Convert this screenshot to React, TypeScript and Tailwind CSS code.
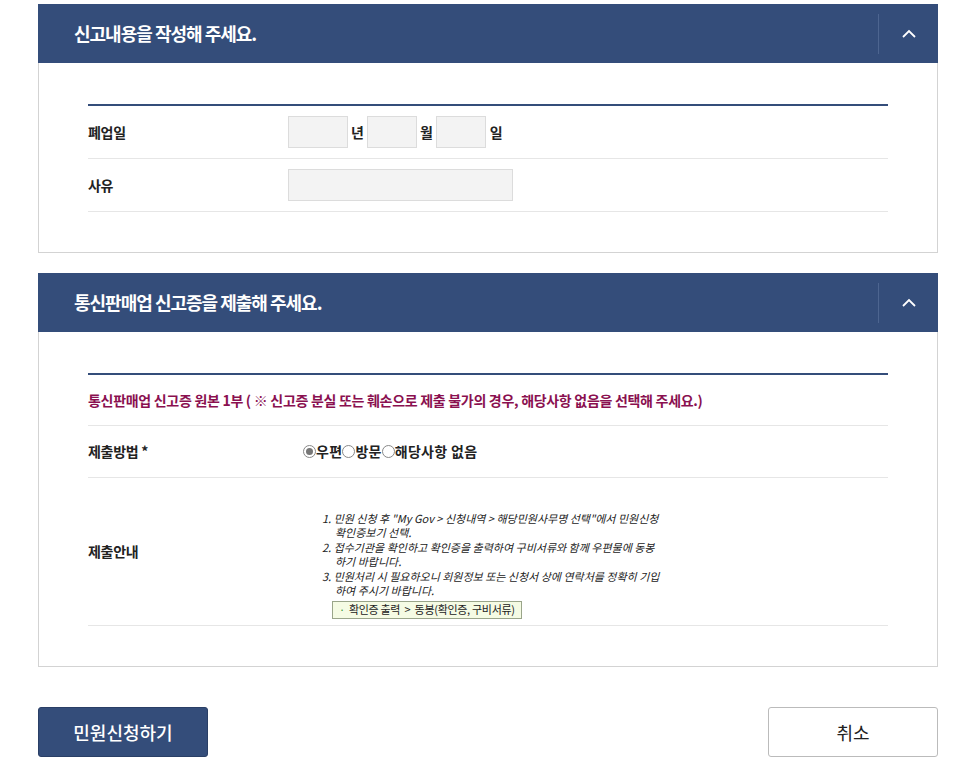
import React from 'react';

const font = "font-['Noto_Sans_CJK_KR','Noto_Sans',sans-serif]";

function SectionHeader({ title }: { title: string }) {
  return (
    <div className="h-[59px] bg-[#344d7a] flex items-center">
      <h2 className="flex-1 pl-[36px] text-white text-[18px] font-bold tracking-[-1px]">{title}</h2>
      <div className="w-px h-[40px] bg-[#4d6590]" />
      <div className="w-[59px] flex items-center justify-center">
        <svg width="16" height="10" viewBox="0 0 16 10" fill="none">
          <path d="M2 8 L8 2 L14 8" stroke="white" strokeWidth="1.8" />
        </svg>
      </div>
    </div>
  );
}

function Row({ label, children, h }: { label: string; children: React.ReactNode; h: string }) {
  return (
    <div className={`flex items-center border-b border-[#e6e6e6] ${h}`}>
      <div className="w-[200px] text-[14px] font-bold text-[#222] tracking-[-0.3px]">{label}</div>
      <div className="flex-1 flex items-center">{children}</div>
    </div>
  );
}

function Box({ w }: { w: string }) {
  return <div className={`${w} h-[32px] bg-[#f3f3f3] border border-[#dcdcdc]`} />;
}

function Radio({ checked }: { checked?: boolean }) {
  return (
    <span className="inline-flex items-center justify-center w-[13px] h-[13px] rounded-full border border-[#888] bg-white">
      {checked && <span className="w-[7px] h-[7px] rounded-full bg-[#777]" />}
    </span>
  );
}

export default function App() {
  return (
    <div className={`${font} w-[964px] min-h-[769px] bg-white pt-[4px]`}>
      <div className="ml-[38px] w-[900px]">
        <SectionHeader title="신고내용을 작성해 주세요." />
        <div className="border border-t-0 border-[#d3d3d3] px-[49px] pt-[41px] pb-[40px]">
          <div className="border-t-2 border-[#344d7a]">
            <Row label="폐업일" h="h-[53px]">
              <Box w="w-[60px]" />
              <span className="text-[14px] font-bold text-[#222] mx-[3px]">년</span>
              <Box w="w-[50px]" />
              <span className="text-[14px] font-bold text-[#222] mx-[3px]">월</span>
              <Box w="w-[50px]" />
              <span className="text-[14px] font-bold text-[#222] ml-[4px]">일</span>
            </Row>
            <Row label="사유" h="h-[53px]">
              <Box w="w-[225px]" />
            </Row>
          </div>
        </div>

        <div className="mt-[20px]">
          <SectionHeader title="통신판매업 신고증을 제출해 주세요." />
          <div className="border border-t-0 border-[#d3d3d3] px-[49px] pt-[41px] pb-[40px]">
            <div className="border-t-2 border-[#344d7a]">
              <div className="h-[51px] flex items-center border-b border-[#e6e6e6] text-[14px] font-bold text-[#8a1050] tracking-[-0.3px]">
                통신판매업 신고증 원본 1부 ( ※ 신고증 분실 또는 훼손으로 제출 불가의 경우, 해당사항 없음을 선택해 주세요.)
              </div>
              <Row label="제출방법 *" h="h-[52px]">
                <div className="flex items-center text-[14px] font-bold text-[#222] ml-[15px] tracking-[0.3px]">
                  <Radio checked />
                  <span>우편</span>
                  <Radio />
                  <span>방문</span>
                  <Radio />
                  <span>해당사항 없음</span>
                </div>
              </Row>
              <Row label="제출안내" h="h-[148px]">
                <div className="ml-[34px] mt-[26px] text-[11px] italic leading-[14.5px] text-[#222] tracking-[0px] font-['Noto_Sans_CJK_KR',sans-serif]">
                  <div>1. 민원 신청 후 "My Gov &gt; 신청내역 &gt; 해당민원사무명 선택"에서 민원신청</div>
                  <div className="pl-[13px]">확인증보기 선택.</div>
                  <div>2. 접수기관을 확인하고 확인증을 출력하여 구비서류와 함께 우편물에 동봉</div>
                  <div className="pl-[13px]">하기 바랍니다.</div>
                  <div>3. 민원처리 시 필요하오니 회원정보 또는 신청서 상에 연락처를 정확히 기입</div>
                  <div className="pl-[13px]">하여 주시기 바랍니다.</div>
                  <div className="ml-[10px] mt-[3px] inline-flex items-center h-[18px] px-[6px] border border-[#9aa58a] bg-[#f5fbe4] not-italic text-[11px] tracking-[-0.3px]">
                    <span className="text-[#3a9a3a] mr-[4px]">·</span>확인증 출력 &nbsp;&gt;&nbsp; 동봉(확인증, 구비서류)
                  </div>
                </div>
              </Row>
            </div>
          </div>
        </div>

        <div className="mt-[40px] flex justify-between">
          <button className="w-[170px] h-[50px] bg-[#344d7a] text-white text-[18px] font-medium rounded-[3px] border border-[#2a3f66]">
            민원신청하기
          </button>
          <button className="w-[170px] h-[50px] bg-white text-[#222] text-[18px] rounded-[3px] border border-[#bbb]">
            취소
          </button>
        </div>
      </div>
    </div>
  );
}
